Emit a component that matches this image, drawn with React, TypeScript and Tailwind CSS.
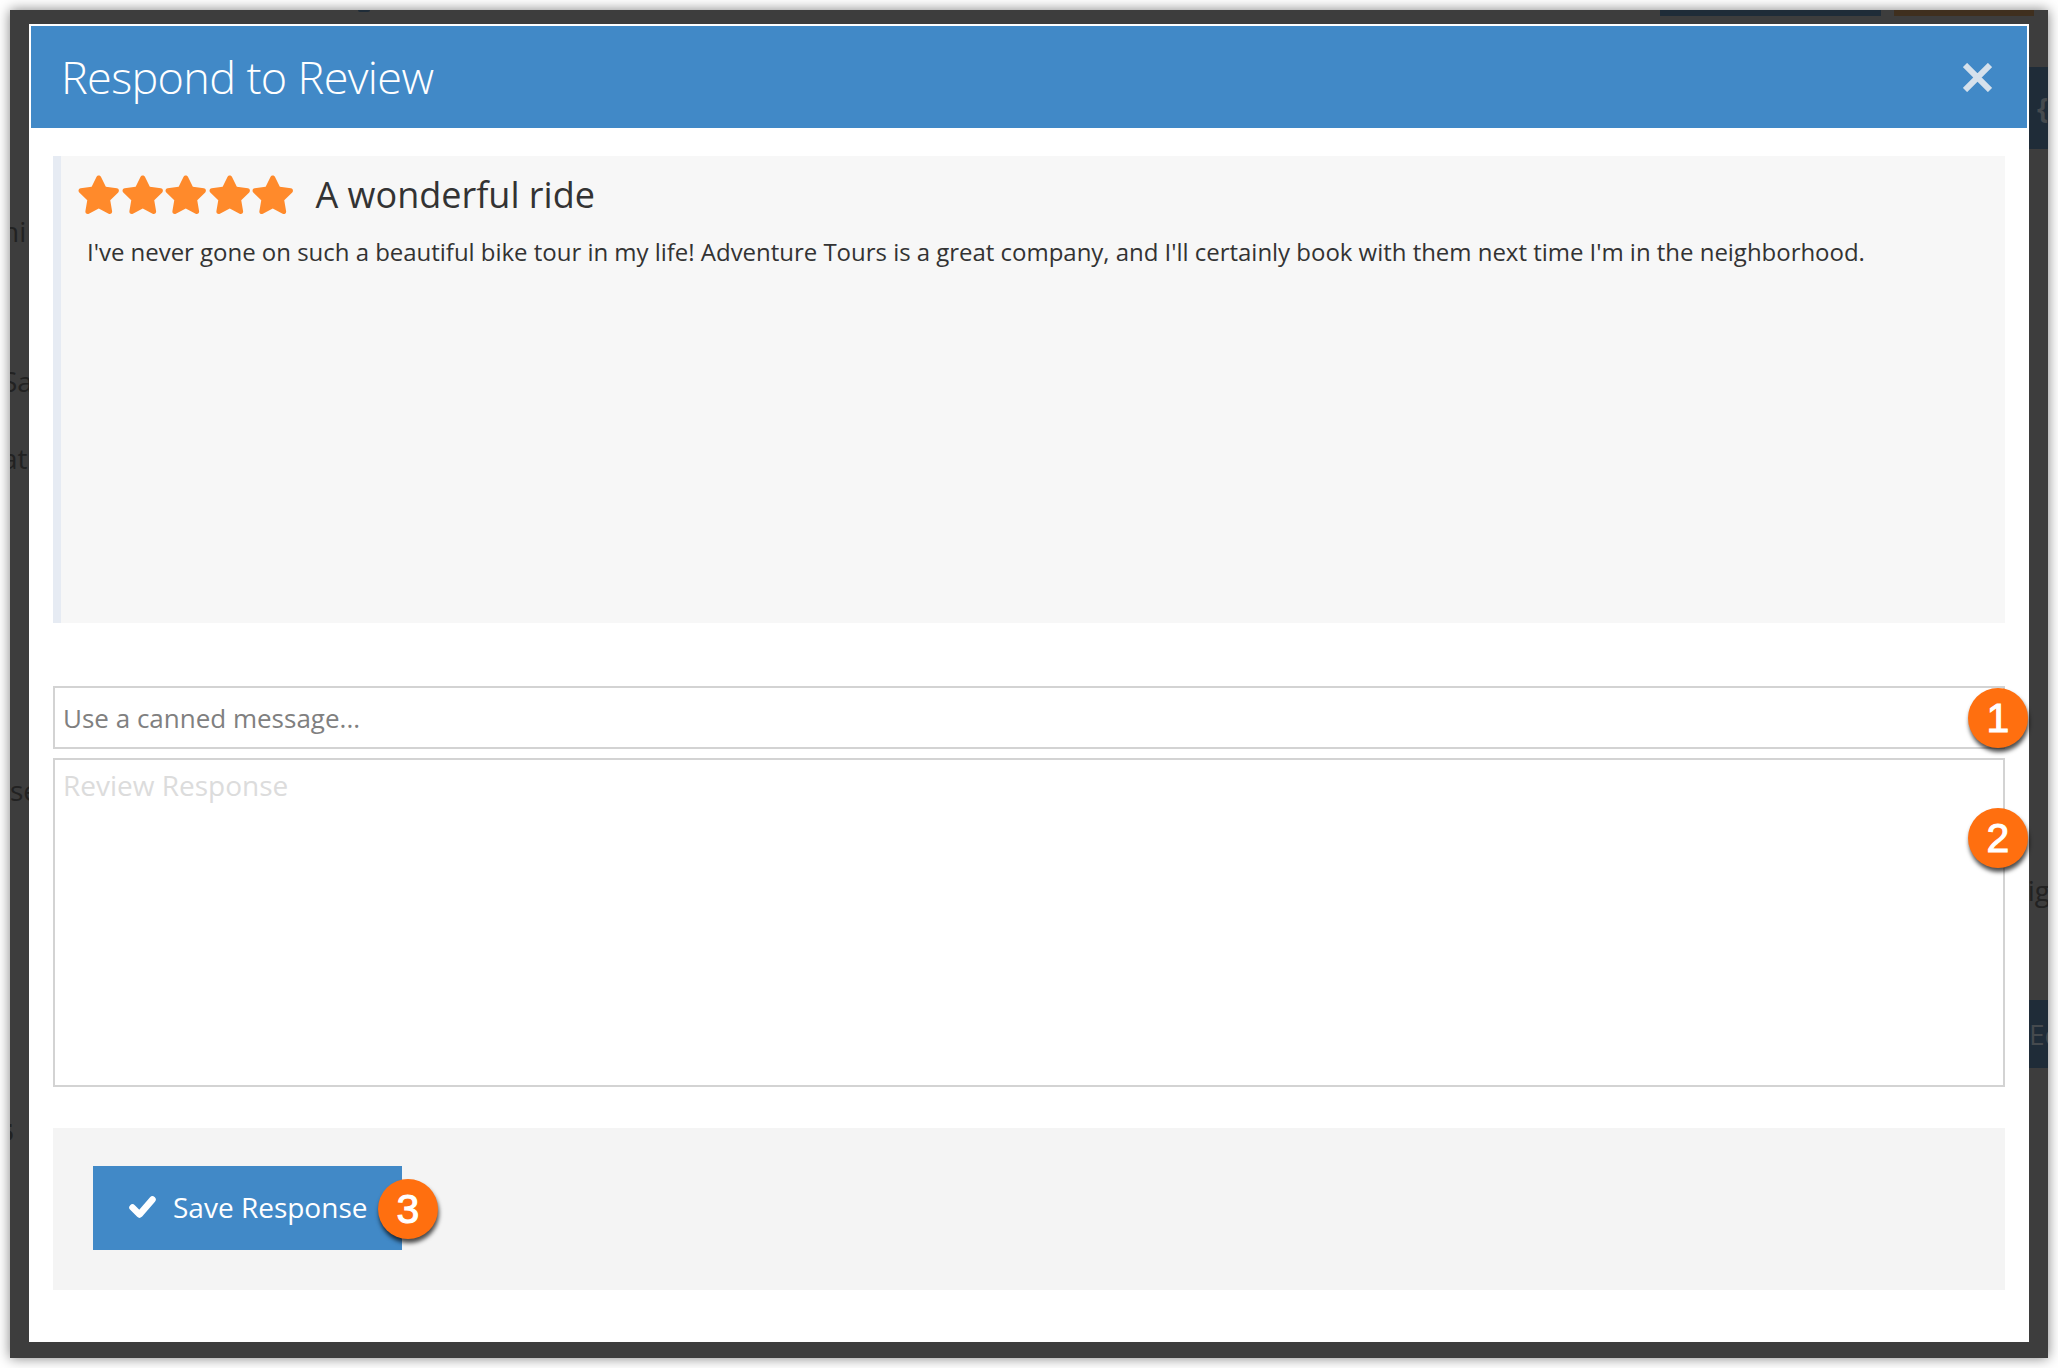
import { FaStar } from "react-icons/fa";

function Badge({ n, className }: { n: number; className: string }) {
  return (
    <div
      className={`absolute flex h-[60px] w-[60px] items-center justify-center rounded-full bg-[#ff6f0f] font-['Liberation_Sans',sans-serif] text-[41px] leading-none text-white shadow-[1px_4px_4px_rgba(0,0,0,0.7)] [-webkit-text-stroke:1px_white] ${className}`}
    >
      {n}
    </div>
  );
}

export default function App() {
  return (
    <div className="h-[1368px] w-[2058px] bg-white p-[10px] font-['Open_Sans',sans-serif]">
      {/* dimmed page behind the modal */}
      <div className="relative h-[1348px] w-[2038px] overflow-hidden bg-[#3d3d3d] pl-[19px] pr-[19px] pt-[14px] shadow-[0_0_12px_rgba(0,0,0,0.5)]">
        <div className="absolute left-[348px] top-0 h-[2px] w-[12px] rounded-b-full bg-[#1f2c38]" />
        <div className="absolute left-[1650px] top-0 h-[6px] w-[221px] bg-[#1f2c38]" />
        <div className="absolute left-[1884px] top-0 h-[6px] w-[140px] bg-[#3f2f1e]" />
        <div className="absolute right-0 top-[57px] flex h-[82px] w-[19px] items-center justify-end bg-[#1f2c38] text-[28px] font-bold text-[#454a4e]">
          &#123;
        </div>
        <div className="absolute right-0 top-[990px] flex h-[68px] w-[19px] items-center bg-[#1f2c38] text-[28px] text-[#454a4e]">
          Ed
        </div>
        <span className="absolute left-[-8px] top-[200px] text-[28px] text-[#222]">hi</span>
        <span className="absolute left-[-8px] top-[350px] text-[28px] text-[#222]">Sa</span>
        <span className="absolute left-[-8px] top-[427px] text-[28px] text-[#222]">at</span>
        <span className="absolute left-0 top-[759px] text-[28px] text-[#222]">se</span>
        <span className="absolute right-[-2px] top-[859px] text-[28px] text-[#222]">ig</span>
        <span className="absolute left-[-10px] top-[1110px] text-[24px] font-bold leading-none text-[#222]">5</span>

        <div className="relative h-[1318px] w-[2000px] bg-white">
          <div className="px-[2px] pt-[2px]">
            <div className="flex h-[102px] items-center justify-between bg-[#4189c7] pl-[30px] pr-[35px]">
              <h1 className="text-[45px] font-light tracking-[-0.65px] text-white">Respond to Review</h1>
              <svg width="29" height="29" viewBox="0 0 29 29">
                <path d="M2 2 27 27M27 2 2 27" stroke="#d5e1ec" strokeWidth="6" />
              </svg>
            </div>
          </div>

          <div className="px-[24px] pt-[28px]">
            <div className="h-[467px] border-l-[8px] border-[#e6ebf3] bg-[#f7f7f7] pl-[16px] pt-[17px]">
              <div className="flex items-center">
                <div className="flex text-[#ff8a2b]">
                  <FaStar size={43.5} />
                  <FaStar size={43.5} />
                  <FaStar size={43.5} />
                  <FaStar size={43.5} />
                  <FaStar size={43.5} />
                </div>
                <h2 className="ml-[21px] text-[36px] leading-[39px] text-[#333]">A wonderful ride</h2>
              </div>
              <p className="ml-[10px] mt-[17px] text-[24px] tracking-[-0.025px] text-[#333]">
                I've never gone on such a beautiful bike tour in my life! Adventure Tours is a great company, and I'll
                certainly book with them next time I'm in the neighborhood.
              </p>
            </div>

            <input
              readOnly
              placeholder="Use a canned message..."
              className="mt-[63px] block h-[63px] w-full border-2 border-[#d3d3d3] px-[8px] text-[26px] text-[#808080] outline-none placeholder:text-[#808080]"
            />
            <textarea
              readOnly
              placeholder="Review Response"
              className="mt-[9px] block h-[329px] w-full resize-none border-2 border-[#d3d3d3] px-[8px] py-[4px] text-[28px] outline-none placeholder:text-[#dcdcdc]"
            />

            <div className="mt-[41px] h-[162px] bg-[#f4f4f4] pl-[40px] pt-[38px]">
              <button className="flex h-[84px] w-[309px] items-center bg-[#4189c7] pb-[2px] pl-[36px] text-[28px] text-white">
                <svg width="27" height="22" viewBox="0 0 27 22">
                  <path d="M3.5 11.5 10.5 18.5 23.5 3.5" fill="none" stroke="white" strokeWidth="6.5" strokeLinejoin="round" strokeLinecap="round" />
                </svg>
                <span className="ml-[17px]">Save Response</span>
              </button>
            </div>
          </div>

          <Badge n={1} className="left-[1939px] top-[664px]" />
          <Badge n={2} className="left-[1939px] top-[784px]" />
          <Badge n={3} className="left-[349px] top-[1155px]" />
        </div>
      </div>
    </div>
  );
}
